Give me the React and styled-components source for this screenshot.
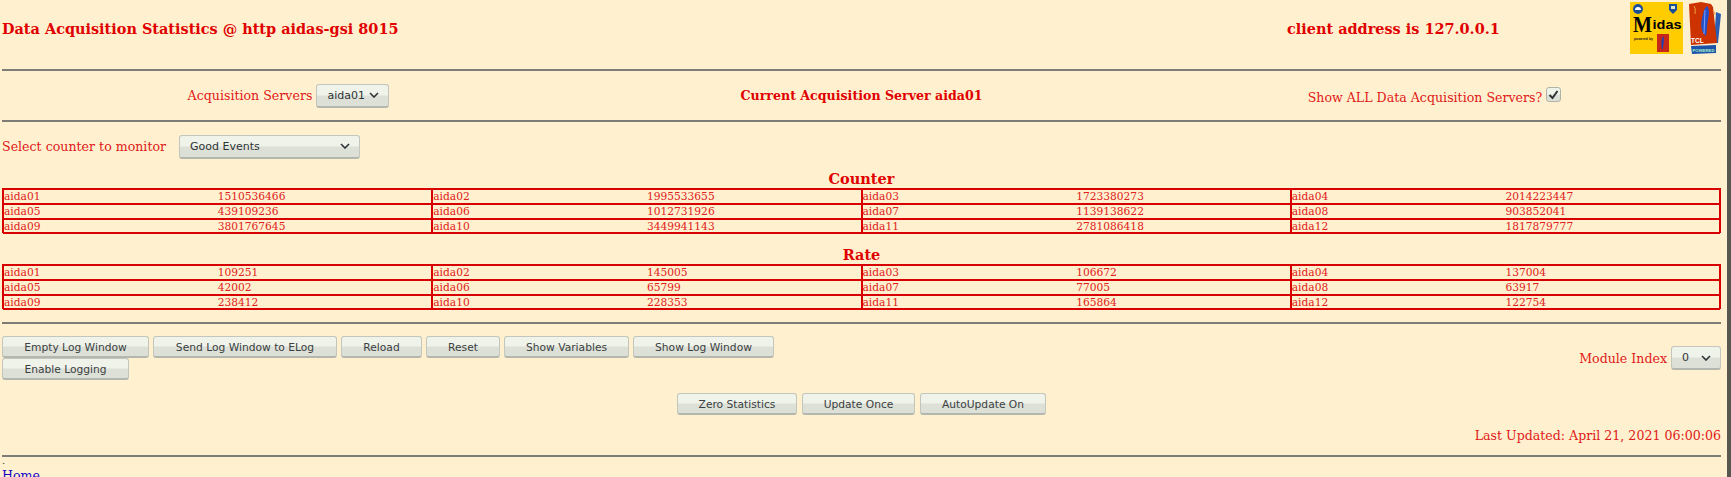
import React from "react";
import styled, { createGlobalStyle } from "styled-components";

const Global = createGlobalStyle`
  html, body { margin: 0; padding: 0; height: 477px; overflow: hidden; background: #fff1cf; }
  #root { height: 477px; }
`;

const Frame = styled.div`
  box-sizing: border-box;
  width: 1731px;
  height: 477px;
  overflow: hidden;
  background: #fff1cf;
  border-right: 4px solid #57574f;
  font-family: "DejaVu Serif", serif;
  font-size: 12.6px;
  color: #e01818;
`;
const Page = styled.div`
  width: 1719px;
  margin-left: 2px;
`;
const Header = styled.header`
  display: grid;
  grid-template-columns: 1285px 1fr auto;
  align-items: center;
  height: 58px;
`;
const Title = styled.h3`
  margin: 0 0 2px;
  font-size: 14.45px;
  font-weight: bold;
  color: #e00000;
`;
const Logos = styled.div`
  display: flex;
  gap: 4px;
  align-items: flex-start;
  height: 56px;
  padding-top: 2px;
`;
const Rule = styled.hr`
  height: 2px;
  border: 0;
  margin: ${(p) => p.$top || 0}px 0 0;
  background: #7d7d76;
`;
const ServerRow = styled.section`
  display: grid;
  grid-template-columns: repeat(3, 1fr);
  align-items: center;
  height: 49px;
`;
const Cell = styled.div`
  display: flex;
  justify-content: center;
  align-items: center;
  gap: 4px;
  padding-top: ${(p) => p.$shift || 0}px;
`;
const Strong = styled.b`
  color: #e00000;
`;
const Select = styled.div`
  box-sizing: border-box;
  display: flex;
  align-items: center;
  justify-content: space-between;
  flex: none;
  width: ${(p) => p.$w}px;
  height: 24px;
  padding: 0 9px 0 10px;
  border: 1px solid #c3c6bc;
  border-bottom: 2px solid #b4b7ad;
  border-radius: 3px;
  background: linear-gradient(#f0f3ea 0 45%, #dde0d7 55% 100%);
  font-family: "DejaVu Sans", sans-serif;
  font-size: 11px;
  color: #2e3436;
`;
const Check = styled.div`
  box-sizing: border-box;
  width: 15px;
  height: 15px;
  margin-top: -6px;
  border: 1px solid #b0b3a9;
  border-radius: 3px;
  background: linear-gradient(#f0f3ea 0 45%, #dde0d7 55% 100%);
  display: flex;
  align-items: center;
  justify-content: center;
`;
const CounterRow = styled.section`
  display: flex;
  align-items: center;
  height: 23px;
  margin-top: 13px;
  gap: 13px;
`;
const Heading = styled.h3`
  margin: ${(p) => p.$top}px 0 0;
  height: 18px;
  line-height: 18px;
  font-size: 14.5px;
  font-weight: bold;
  text-align: center;
  color: #e00000;
`;
const Table = styled.div`
  display: grid;
  grid-template-columns: repeat(4, 1fr);
  grid-auto-rows: 1fr;
  border: 1px solid #d80000;
  box-sizing: border-box;
  height: 45px;
`;
const TableCell = styled.div`
  display: grid;
  grid-template-columns: 1fr 1fr;
  border: 1px solid #d80000;
  box-sizing: border-box;
  font-size: 10.67px;
  line-height: 13px;
  color: #e02020;
`;
const ActionBar = styled.section`
  display: flex;
  justify-content: space-between;
  align-items: center;
  margin-top: 12px;
`;
const ButtonFlow = styled.div`
  display: flex;
  flex-wrap: wrap;
  width: 780px;
  column-gap: 4px;
`;
const Button = styled.button`
  box-sizing: border-box;
  height: 22px;
  padding: 1px 0 0;
  width: ${(p) => p.$w}px;
  border: 1px solid #c3c6bc;
  border-bottom: 2px solid #b4b7ad;
  border-radius: 3px;
  background: linear-gradient(#f0f3ea 0 45%, #dde0d7 55% 100%);
  font-family: "DejaVu Sans", sans-serif;
  font-size: 10.7px;
  color: #3a4042;
`;
const ModuleBox = styled.div`
  display: flex;
  align-items: center;
  gap: 4px;
`;
const CenterBar = styled.section`
  display: flex;
  justify-content: center;
  gap: 5px;
  margin-top: 13px;
`;
const Updated = styled.div`
  margin-top: 12px;
  height: 16px;
  line-height: 18px;
  text-align: right;
`;
const Dot = styled.div`
  height: 11px;
  font-size: 10px;
  line-height: 8px;
  color: #333;
`;
const HomeLink = styled.a`
  display: block;
  line-height: 16px;
  color: #1a00c8;
`;

const Chevron = () => (
  <svg width="10" height="6" viewBox="0 0 10 6">
    <path d="M1 1l4 4 4-4" fill="none" stroke="#2e3436" strokeWidth="1.6" />
  </svg>
);

const MidasLogo = () => (
  <svg width="53" height="52" viewBox="0 0 53 52">
    <rect width="53" height="52" fill="#ffcc00" />
    <circle cx="8" cy="7" r="5" fill="#1c4f96" />
    <path d="M5 8a3 3 0 0 1 6 0z" fill="#fff" />
    <path d="M39 2h8v6l-4 4-4-4z" fill="#1c4f96" />
    <path d="M41 4h4v3h-4z" fill="#dfe6c8" />
    <text x="3" y="30" fontFamily="Liberation Serif" fontWeight="bold" fontSize="24" textLength="19" lengthAdjust="spacingAndGlyphs" fill="#000">M</text>
    <text x="22.5" y="27" fontFamily="Liberation Sans" fontWeight="bold" fontSize="12.5" textLength="29" lengthAdjust="spacingAndGlyphs" fill="#000">idas</text>
    <text x="4" y="38" fontFamily="Liberation Sans" fontWeight="bold" fontSize="3.4" fill="#222">powered by</text>
    <rect x="27" y="32" width="12" height="18" fill="#c8281a" />
    <path d="M33 34c2 3 0 8 0 13h-1c-1-5-1-9 1-13z" fill="#2040b0" />
  </svg>
);

const TclLogo = () => (
  <svg width="34" height="53" viewBox="0 0 34 53">
    <path d="M29 10l5 2-3 29-4 0z" fill="#2a5cb0" />
    <path d="M2 2l12-2 10 2 2 3 4 36-26 2z" fill="#cc3300" />
    <path d="M20 4c3 4 2 9 1 14s-1 11-2 16c-4-3-6-10-4-17 1-5 2-11 5-13z" fill="#2450c8" />
    <path d="M18 8l-1 24" fill="none" stroke="#7fa0ff" strokeWidth="1" />
    <path d="M7 4q2 2 1 8M26 8q2 2 2 5" fill="none" stroke="#f0a040" strokeWidth="1" />
    <text x="4" y="41" fontFamily="Liberation Sans" fontWeight="bold" fontSize="6.5" fill="#fff">TCL</text>
    <path d="M4 44l25-1 0 8-24 1z" fill="#1c52a8" />
    <text x="5.5" y="50" fontFamily="Liberation Sans" fontWeight="bold" fontSize="4.4" textLength="22" lengthAdjust="spacingAndGlyphs" fill="#a8f0c8">POWERED</text>
  </svg>
);

const counters = [
  ["aida01", "1510536466"], ["aida02", "1995533655"], ["aida03", "1723380273"], ["aida04", "2014223447"],
  ["aida05", "439109236"], ["aida06", "1012731926"], ["aida07", "1139138622"], ["aida08", "903852041"],
  ["aida09", "3801767645"], ["aida10", "3449941143"], ["aida11", "2781086418"], ["aida12", "1817879777"],
];
const rates = [
  ["aida01", "109251"], ["aida02", "145005"], ["aida03", "106672"], ["aida04", "137004"],
  ["aida05", "42002"], ["aida06", "65799"], ["aida07", "77005"], ["aida08", "63917"],
  ["aida09", "238412"], ["aida10", "228353"], ["aida11", "165864"], ["aida12", "122754"],
];

const Stats = ({ rows }) => (
  <Table>
    {rows.map(([name, value]) => (
      <TableCell key={name}>
        <span>{name}</span>
        <span>{value}</span>
      </TableCell>
    ))}
  </Table>
);

export default function App() {
  return (
    <Frame>
      <Global />
      <Page>
        <Header>
          <Title>Data Acquisition Statistics @ http aidas-gsi 8015</Title>
          <Title>client address is 127.0.0.1</Title>
          <Logos>
            <MidasLogo />
            <TclLogo />
          </Logos>
        </Header>
        <Rule $top={11} />
        <ServerRow>
          <Cell>
            <span>Acquisition Servers</span>
            <Select $w={73}>aida01 <Chevron /></Select>
          </Cell>
          <Cell><Strong>Current Acquisition Server aida01</Strong></Cell>
          <Cell $shift={4}>
            <span>Show ALL Data Acquisition Servers?</span>
            <Check>
              <svg width="11" height="10" viewBox="0 0 11 10">
                <path d="M1.5 5l3 3 5-7" fill="none" stroke="#2e3436" strokeWidth="2" />
              </svg>
            </Check>
          </Cell>
        </ServerRow>
        <Rule />
        <CounterRow>
          <span>Select counter to monitor</span>
          <Select $w={181}>Good Events <Chevron /></Select>
        </CounterRow>
        <Heading $top={12}>Counter</Heading>
        <Stats rows={counters} />
        <Heading $top={13}>Rate</Heading>
        <Stats rows={rates} />
        <Rule $top={13} />
        <ActionBar>
          <ButtonFlow>
            <Button $w={147}>Empty Log Window</Button>
            <Button $w={184}>Send Log Window to ELog</Button>
            <Button $w={81}>Reload</Button>
            <Button $w={74}>Reset</Button>
            <Button $w={125}>Show Variables</Button>
            <Button $w={141}>Show Log Window</Button>
            <Button $w={127}>Enable Logging</Button>
          </ButtonFlow>
          <ModuleBox>
            <span>Module Index</span>
            <Select $w={50}>0 <Chevron /></Select>
          </ModuleBox>
        </ActionBar>
        <CenterBar>
          <Button $w={120}>Zero Statistics</Button>
          <Button $w={113}>Update Once</Button>
          <Button $w={126}>AutoUpdate On</Button>
        </CenterBar>
        <Updated>Last Updated: April 21, 2021 06:00:06</Updated>
        <Rule $top={12} />
        <Dot>.</Dot>
        <HomeLink href="#">Home</HomeLink>
      </Page>
    </Frame>
  );
}
